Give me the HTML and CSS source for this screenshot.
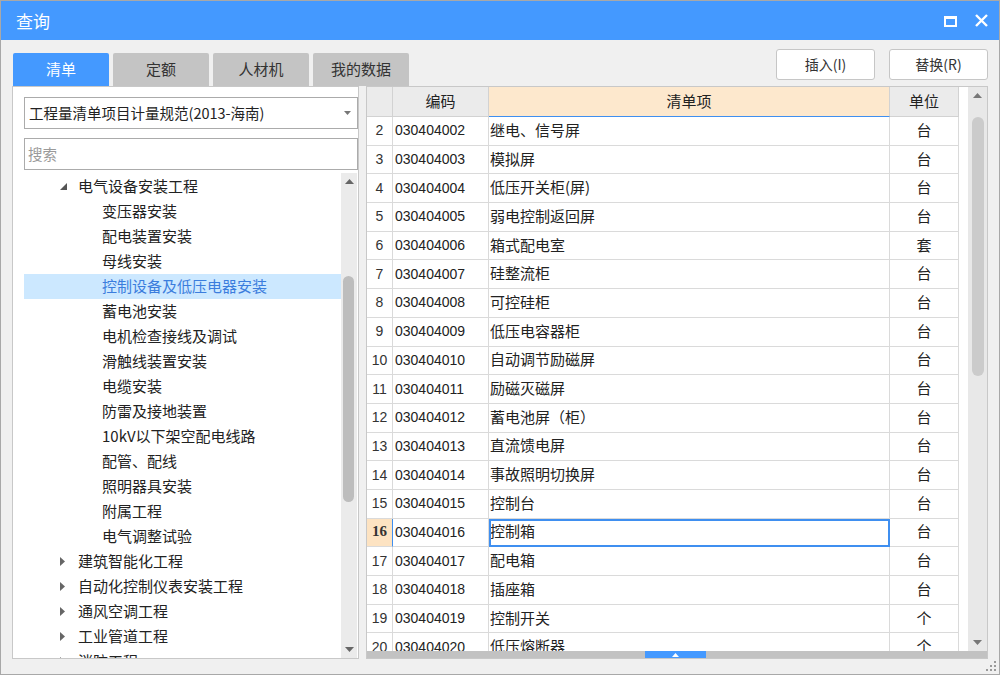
FILE: index.html
```html
<!DOCTYPE html>
<html lang="zh-CN">
<head>
<meta charset="utf-8">
<title>查询</title>
<link rel="stylesheet" href="styles.css">
</head>
<body>
<div class="window">
  <div class="titlebar">
    <span class="title">查询</span>
    <div class="controls">
      <svg class="ico-max" width="13" height="11" viewBox="0 0 13 11"><rect x="1" y="1.5" width="11" height="8.5" fill="none" stroke="#fff" stroke-width="2"/><rect x="0" y="0" width="13" height="3" fill="#fff"/></svg>
      <svg class="ico-close" width="13" height="13" viewBox="0 0 13 13"><path d="M1 1 L12 12 M12 1 L1 12" stroke="#fff" stroke-width="2.4" fill="none"/></svg>
    </div>
  </div>

  <div class="toolbar">
    <div class="tabs">
      <div class="tab active">清单</div>
      <div class="tab">定额</div>
      <div class="tab">人材机</div>
      <div class="tab">我的数据</div>
    </div>
    <div class="actions">
      <button class="btn">插入(I)</button>
      <button class="btn">替换(R)</button>
    </div>
  </div>

  <div class="panels">
    <div class="left-panel">
      <div class="select">
        <span>工程量清单项目计量规范(2013-海南)</span>
        <svg class="select-arrow" width="7" height="4" viewBox="0 0 7 4"><path d="M0 0 H7 L3.5 4 Z" fill="#777"/></svg>
      </div>
      <div class="search">搜索</div>
      <div class="tree">
        <div class="tree-list">
          <div class="node l1"><span class="tog"><svg width="7" height="7" viewBox="0 0 7 7"><path d="M7 0 V7 H0 Z" fill="#555"/></svg></span>电气设备安装工程</div>
          <div class="node l2">变压器安装</div>
          <div class="node l2">配电装置安装</div>
          <div class="node l2">母线安装</div>
          <div class="node l2 sel">控制设备及低压电器安装</div>
          <div class="node l2">蓄电池安装</div>
          <div class="node l2">电机检查接线及调试</div>
          <div class="node l2">滑触线装置安装</div>
          <div class="node l2">电缆安装</div>
          <div class="node l2">防雷及接地装置</div>
          <div class="node l2">10kV以下架空配电线路</div>
          <div class="node l2">配管、配线</div>
          <div class="node l2">照明器具安装</div>
          <div class="node l2">附属工程</div>
          <div class="node l2">电气调整试验</div>
          <div class="node l1"><span class="tog"><svg width="5" height="9" viewBox="0 0 5 9"><path d="M0 0 L5 4.5 L0 9 Z" fill="#666"/></svg></span>建筑智能化工程</div>
          <div class="node l1"><span class="tog"><svg width="5" height="9" viewBox="0 0 5 9"><path d="M0 0 L5 4.5 L0 9 Z" fill="#666"/></svg></span>自动化控制仪表安装工程</div>
          <div class="node l1"><span class="tog"><svg width="5" height="9" viewBox="0 0 5 9"><path d="M0 0 L5 4.5 L0 9 Z" fill="#666"/></svg></span>通风空调工程</div>
          <div class="node l1"><span class="tog"><svg width="5" height="9" viewBox="0 0 5 9"><path d="M0 0 L5 4.5 L0 9 Z" fill="#666"/></svg></span>工业管道工程</div>
          <div class="node l1"><span class="tog"><svg width="5" height="9" viewBox="0 0 5 9"><path d="M0 0 L5 4.5 L0 9 Z" fill="#666"/></svg></span>消防工程</div>
        </div>
        <div class="vscroll tree-scroll">
          <svg class="arr" width="9" height="5" viewBox="0 0 9 5"><path d="M0 5 L4.5 0 L9 5 Z" fill="#666"/></svg>
          <div class="track"><div class="thumb tree-thumb"></div></div>
          <svg class="arr" width="9" height="5" viewBox="0 0 9 5"><path d="M0 0 L4.5 5 L9 0 Z" fill="#666"/></svg>
        </div>
      </div>
    </div>

    <div class="grid-panel">
      <div class="table">
        <div class="row head">
          <div class="cell num"></div>
          <div class="cell c">编码</div>
          <div class="cell c curcol">清单项</div>
          <div class="cell c">单位</div>
        </div>
        <div class="row"><div class="cell num">2</div><div class="cell code">030404002</div><div class="cell name">继电、信号屏</div><div class="cell unit">台</div></div>
        <div class="row"><div class="cell num">3</div><div class="cell code">030404003</div><div class="cell name">模拟屏</div><div class="cell unit">台</div></div>
        <div class="row"><div class="cell num">4</div><div class="cell code">030404004</div><div class="cell name">低压开关柜(屏)</div><div class="cell unit">台</div></div>
        <div class="row"><div class="cell num">5</div><div class="cell code">030404005</div><div class="cell name">弱电控制返回屏</div><div class="cell unit">台</div></div>
        <div class="row"><div class="cell num">6</div><div class="cell code">030404006</div><div class="cell name">箱式配电室</div><div class="cell unit">套</div></div>
        <div class="row"><div class="cell num">7</div><div class="cell code">030404007</div><div class="cell name">硅整流柜</div><div class="cell unit">台</div></div>
        <div class="row"><div class="cell num">8</div><div class="cell code">030404008</div><div class="cell name">可控硅柜</div><div class="cell unit">台</div></div>
        <div class="row"><div class="cell num">9</div><div class="cell code">030404009</div><div class="cell name">低压电容器柜</div><div class="cell unit">台</div></div>
        <div class="row"><div class="cell num">10</div><div class="cell code">030404010</div><div class="cell name">自动调节励磁屏</div><div class="cell unit">台</div></div>
        <div class="row"><div class="cell num">11</div><div class="cell code">030404011</div><div class="cell name">励磁灭磁屏</div><div class="cell unit">台</div></div>
        <div class="row"><div class="cell num">12</div><div class="cell code">030404012</div><div class="cell name">蓄电池屏（柜）</div><div class="cell unit">台</div></div>
        <div class="row"><div class="cell num">13</div><div class="cell code">030404013</div><div class="cell name">直流馈电屏</div><div class="cell unit">台</div></div>
        <div class="row"><div class="cell num">14</div><div class="cell code">030404014</div><div class="cell name">事故照明切换屏</div><div class="cell unit">台</div></div>
        <div class="row"><div class="cell num">15</div><div class="cell code">030404015</div><div class="cell name">控制台</div><div class="cell unit">台</div></div>
        <div class="row cur"><div class="cell num">16</div><div class="cell code">030404016</div><div class="cell name focus">控制箱</div><div class="cell unit">台</div></div>
        <div class="row"><div class="cell num">17</div><div class="cell code">030404017</div><div class="cell name">配电箱</div><div class="cell unit">台</div></div>
        <div class="row"><div class="cell num">18</div><div class="cell code">030404018</div><div class="cell name">插座箱</div><div class="cell unit">台</div></div>
        <div class="row"><div class="cell num">19</div><div class="cell code">030404019</div><div class="cell name">控制开关</div><div class="cell unit">个</div></div>
        <div class="row"><div class="cell num">20</div><div class="cell code">030404020</div><div class="cell name">低压熔断器</div><div class="cell unit">个</div></div>
      </div>
      <div class="vscroll grid-scroll">
        <svg class="arr" width="9" height="5" viewBox="0 0 9 5"><path d="M0 5 L4.5 0 L9 5 Z" fill="#777"/></svg>
        <div class="track"><div class="thumb grid-thumb"></div></div>
        <svg class="arr" width="9" height="5" viewBox="0 0 9 5"><path d="M0 0 L4.5 5 L9 0 Z" fill="#777"/></svg>
      </div>
      <div class="hscroll">
        <div class="hthumb"><svg width="7" height="4" viewBox="0 0 7 4"><path d="M0 4 L3.5 0 L7 4 Z" fill="#fff"/></svg></div>
      </div>
    </div>
  </div>

  <div class="statusbar">
    <svg class="grip" width="10" height="10" viewBox="0 0 10 10" fill="#9a9a9a">
      <rect x="8" y="0" width="2" height="2"/>
      <rect x="4" y="4" width="2" height="2"/><rect x="8" y="4" width="2" height="2"/>
      <rect x="0" y="8" width="2" height="2"/><rect x="4" y="8" width="2" height="2"/><rect x="8" y="8" width="2" height="2"/>
    </svg>
  </div>
</div>
</body>
</html>
```

FILE: styles.css
```css
* { box-sizing: border-box; }
html, body { margin: 0; padding: 0; }
body {
  width: 1000px;
  height: 675px;
  overflow: hidden;
  font-family: "Noto Sans CJK SC", "Noto Sans", sans-serif;
  color: #222;
}

.window {
  width: 1000px;
  height: 675px;
  border: 1px solid #a8a8a8;
  background: #f0f0f0;
  display: flex;
  flex-direction: column;
}

/* title bar */
.titlebar {
  height: 39px;
  flex: none;
  background: #4499ff;
  color: #fff;
  display: flex;
  align-items: center;
  padding: 0 11px 0 15px;
}
.title { font-size: 17px; line-height: 1; margin-top: -1px; }
.controls {
  margin-left: auto;
  display: flex;
  align-items: center;
  gap: 18px;
}
.ico-max { margin-top: 1px; }

/* toolbar */
.toolbar {
  height: 46px;
  flex: none;
  display: flex;
  align-items: flex-end;
  padding: 0 11px 0 12px;
}
.tabs { display: flex; gap: 4px; }
.tab {
  width: 96px;
  height: 33px;
  background: #c4c4c4;
  color: #333;
  border-radius: 2px 2px 0 0;
  font-size: 15px;
  display: flex;
  align-items: center;
  justify-content: center;
  padding-bottom: 3px;
}
.tab.active { background: #4499ff; color: #fff; }
.actions {
  margin-left: auto;
  display: flex;
  gap: 14px;
  margin-bottom: 6px;
}
.btn {
  width: 99px;
  height: 31px;
  border: 1px solid #c6c6c6;
  border-radius: 3px;
  background: #fff;
  font-family: "Noto Sans CJK SC", sans-serif;
  font-size: 14px;
  color: #333;
  padding: 0 0 2px;
}

/* panels */
.panels {
  height: 573px;
  flex: none;
  display: flex;
  gap: 7px;
  padding: 0 11px;
}
.left-panel {
  width: 347px;
  flex: none;
  background: #fff;
  border: 1px solid #c8c8c8;
  padding: 10px 0 0 11px;
  display: flex;
  flex-direction: column;
}
.select {
  height: 32px;
  flex: none;
  border: 1px solid #ababab;
  display: flex;
  align-items: center;
  padding: 0 6px 2px 4px;
  font-size: 14.5px;
  color: #222;
}
.select-arrow { margin-left: auto; margin-top: 2px; }
.search {
  height: 32px;
  flex: none;
  margin-top: 9px;
  border: 1px solid #ababab;
  display: flex;
  align-items: center;
  padding: 0 3px 2px;
  font-size: 14.5px;
  color: #9a9a9a;
}
.tree {
  flex: 1;
  min-height: 0;
  margin-top: 3px;
  display: flex;
  overflow: hidden;
}
.tree-list {
  width: 317px;
  flex: none;
  padding-top: 1px;
}
.node {
  height: 25px;
  display: flex;
  align-items: center;
  font-size: 15px;
  white-space: nowrap;
  color: #222;
  padding-bottom: 2px;
}
.node.l1 { padding-left: 34px; }
.node.l2 { padding-left: 78px; }
.node.sel { background: #cce8ff; color: #3b7ddd; }
.tog {
  width: 20px;
  flex: none;
  display: flex;
  align-items: center;
  padding-left: 2px;
  padding-top: 2px;
}

/* scrollbars */
.vscroll {
  display: flex;
  flex-direction: column;
  align-items: center;
  background: #ebebeb;
}
.vscroll .arr { flex: none; margin: 6px 0; }
.vscroll .track { flex: 1; width: 100%; position: relative; }
.tree-scroll { width: 16px; flex: none; }
.thumb {
  position: absolute;
  border-radius: 6px;
}
.tree-thumb { left: 2px; right: 3px; top: 86px; height: 226px; background: #bdbdbd; }
.grid-scroll {
  grid-column: 2;
  grid-row: 1;
  background: #e8e8e8;
}
.grid-thumb { left: 4px; right: 3px; top: 13px; height: 259px; background: #cbcbcb; }

/* grid */
.grid-panel {
  flex: 1;
  background: #fff;
  border: 1px solid #c8c8c8;
  display: grid;
  grid-template-columns: 1fr 19px;
  grid-template-rows: 1fr 7px;
  overflow: hidden;
}
.table { grid-column: 1; grid-row: 1; overflow: hidden; }
.row {
  display: grid;
  grid-template-columns: 26px 96px 401px 69px;
  height: 28.7px;
}
.row.head { height: 30px; }
.cell {
  border-right: 1px solid #dadada;
  border-bottom: 1px solid #dadada;
  display: flex;
  align-items: center;
  white-space: nowrap;
  overflow: hidden;
  padding-bottom: 3px;
}
.head .cell {
  background: #ebebeb;
  justify-content: center;
  font-size: 15px;
  color: #222;
  border-color: #d2d2d2;
}
.head .cell.curcol { background: #fde8cd; border-bottom-color: #3f8ff0; }
.cell.num {
  justify-content: center;
  font-family: "Liberation Sans", sans-serif;
  font-size: 14px;
  color: #333;
  padding-bottom: 1px;
}
.cell.code {
  font-family: "Liberation Sans", sans-serif;
  font-size: 14px;
  padding-left: 2px;
  padding-bottom: 1px;
  color: #222;
}
.cell.name { font-size: 15px; padding-left: 1px; }
.cell.unit { font-size: 15px; justify-content: center; }
.row.cur .num {
  background: #fde3c2;
  font-family: "Liberation Serif", serif;
  font-weight: bold;
  font-size: 15px;
  border-right-color: #3f8ff0;
}
.cell.focus { outline: 2px solid #3f8ff0; outline-offset: -2px; }

.hscroll {
  grid-column: 1 / span 2;
  grid-row: 2;
  background: #c2c2c2;
  position: relative;
}
.hthumb {
  position: absolute;
  left: 278px;
  top: 0;
  width: 61px;
  height: 7px;
  background: #4499ff;
  display: flex;
  align-items: center;
  justify-content: center;
}

/* status bar */
.statusbar {
  flex: 1;
  display: flex;
  justify-content: flex-end;
  align-items: flex-end;
  padding: 0 3px 3px 0;
}
```
